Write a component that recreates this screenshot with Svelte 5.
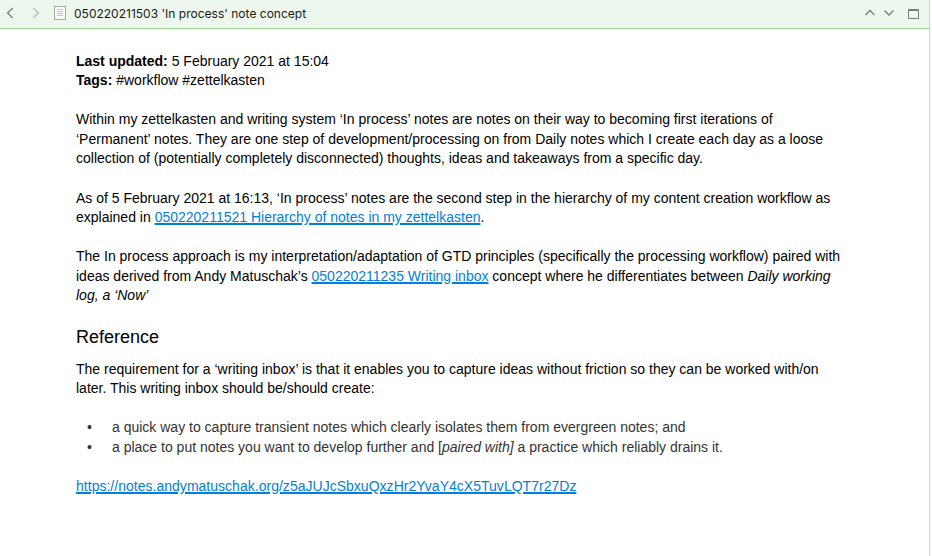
<script>
  const title = "050220211503 'In process' note concept";
</script>

<div class="window">
  <header class="toolbar">
    <svg class="nav" width="54" height="28" viewBox="0 0 54 28" fill="none">
      <path d="M12.8 8 L7.6 13 L12.8 18" stroke="#7f877e" stroke-width="1.5" />
      <path d="M33.2 8 L38.4 13 L33.2 18" stroke="#b9c2b9" stroke-width="1.5" />
    </svg>
    <svg class="doc" width="12" height="14" viewBox="0 0 12 14">
      <rect x="0.5" y="0.5" width="11" height="13" fill="#fafcfa" stroke="#a3aaa3" />
      <path d="M3 3.5H9M3 5.5H9M3 7.5H9M3 9.5H9" stroke="#c3c8c3" />
    </svg>
    <h1>{title}</h1>
    <svg class="actions" width="65" height="28" viewBox="0 0 65 28" fill="none" stroke="#777e76">
      <path d="M1.5 15 L6 10.5 L10.5 15" stroke-width="1.4" />
      <path d="M20.5 10.5 L25 15 L29.5 10.5" stroke-width="1.4" />
      <path d="M44.5 9.5H54.5V18.5H44.5ZM44.5 10.5H54.5" />
    </svg>
  </header>

  <main class="note">
    <p>
      <span class="line"><b>Last updated:</b> 5 February 2021 at 15:04</span>
      <span class="line"><b>Tags:</b> #workflow #zettelkasten</span>
    </p>
    <p>
      <span class="line">Within my zettelkasten and writing system ‘In process’ notes are notes on their way to becoming first iterations of</span>
      <span class="line">‘Permanent’ notes. They are one step of development/processing on from Daily notes which I create each day as a loose</span>
      <span class="line">collection of (potentially completely disconnected) thoughts, ideas and takeaways from a specific day.</span>
    </p>
    <p>
      <span class="line">As of 5 February 2021 at 16:13, ‘In process’ notes are the second step in the hierarchy of my content creation workflow as</span>
      <span class="line">explained in <a href="#hierarchy">050220211521 Hierarchy of notes in my zettelkasten</a>.</span>
    </p>
    <p>
      <span class="line">The In process approach is my interpretation/adaptation of GTD principles (specifically the processing workflow) paired with</span>
      <span class="line">ideas derived from Andy Matuschak’s <a href="#inbox">050220211235 Writing inbox</a> concept where he differentiates between <i>Daily working</i></span>
      <span class="line"><i>log, a ‘Now’</i></span>
    </p>
    <h2>Reference</h2>
    <p>
      <span class="line">The requirement for a ‘writing inbox’ is that it enables you to capture ideas without friction so they can be worked with/on</span>
      <span class="line">later. This writing inbox should be/should create:</span>
    </p>
    <ul>
      <li><span class="bullet">•</span><span>a quick way to capture transient notes which clearly isolates them from evergreen notes; and</span></li>
      <li><span class="bullet">•</span><span>a place to put notes you want to develop further and [<i>paired with]</i> a practice which reliably drains it.</span></li>
    </ul>
    <p class="source"><a href="#source">https://notes.andymatuschak.org/z5aJUJcSbxuQxzHr2YvaY4cX5TuvLQT7r27Dz</a></p>
  </main>
</div>

<style>
  :global(body) { background: #fafafa; overflow: hidden; }
  .window {
    width: 929px;
    height: 556px;
    background: #fff;
    border-right: 1px solid #d2d2d2;
    font-family: "Liberation Sans", Arial, sans-serif;
    color: #000;
  }
  .toolbar {
    display: flex;
    align-items: center;
    height: 28px;
    background: #eef7ee;
    border-bottom: 1px solid #9bd896;
  }
  .doc { margin-bottom: 2px; }
  h1 {
    flex: 1;
    margin: 0 0 1px 8px;
    font: 400 12px/16px Inter, sans-serif;
    letter-spacing: 0.01px;
    color: #1a1a1a;
    white-space: nowrap;
  }
  .note {
    padding: 22.8px 0 0 76px;
    font-size: 14px;
    line-height: 19.55px;
    white-space: nowrap;
  }
  p { margin: 0 0 19.5px; }
  .line { display: block; }
  a {
    color: #0080de;
    text-decoration: underline;
    text-decoration-thickness: 2px;
    text-underline-offset: 1px;
  }
  .source { letter-spacing: 0.02px; }
  h2 {
    margin: 0 0 10.4px;
    font-size: 18px;
    font-weight: 400;
    line-height: 24px;
  }
  ul {
    margin: 0 0 19.5px;
    padding: 0;
    list-style: none;
    color: #333;
  }
  li { display: flex; }
  .bullet { width: 25px; padding-left: 11px; }
</style>
